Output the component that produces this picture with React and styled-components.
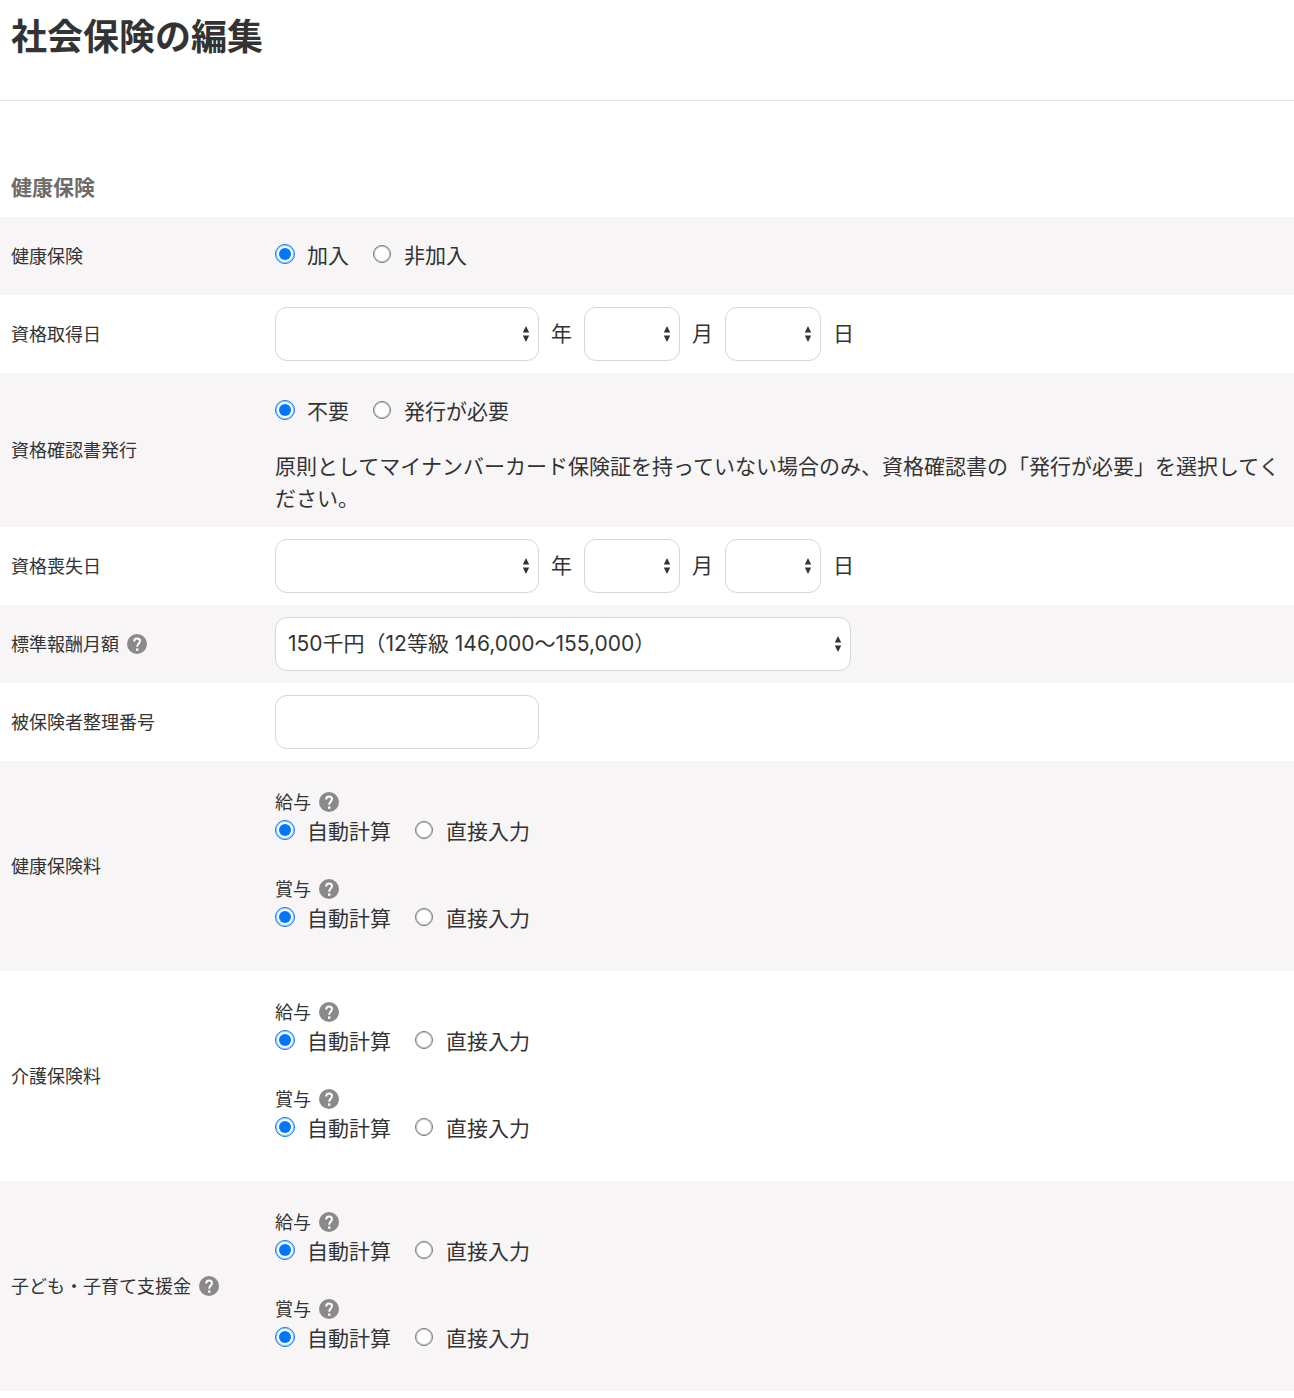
import React, { useId } from "react";
import styled, { createGlobalStyle } from "styled-components";

const GlobalStyle = createGlobalStyle`
    *,
    *::before,
    *::after {
        box-sizing: border-box;
    }
    body {
        margin: 0;
        background-color: #fff;
        color: #333;
        font-family: Inter, "Noto Sans CJK JP", sans-serif;
        font-size: 21px;
        line-height: 32px;
    }
`;

const Header = styled.header`
    padding: 12px 11px 38px;
    border-bottom: 1px solid #e4e4e4;
`;

const Title = styled.h1`
    margin: 0;
    font-size: 36px;
    font-weight: 700;
    line-height: 50px;
`;

const SectionTitle = styled.h2`
    margin: 0;
    padding: 71px 11px 13px;
    color: #6e6b69;
    font-size: 21px;
    font-weight: 700;
`;

const Row = styled.div`
    display: flex;
    &:nth-child(odd) {
        background-color: #f7f5f6;
    }
`;

const RowLabel = styled.div`
    display: flex;
    flex: none;
    align-items: center;
    gap: 8px;
    width: 264px;
    padding: 14px 0 12px 11px;
    font-size: 18px;
`;

const RowBody = styled.div`
    flex: 1;
    min-width: 0;
    padding: 12px 11px;
`;

const HelpButton = styled.button`
    display: flex;
    margin: 0 0 3px;
    padding: 0;
    border: 0;
    background: none;
    color: #8c8a88;
    cursor: pointer;
`;

const RadioGroup = styled.div`
    display: flex;
    align-items: center;
    gap: 23px;
    min-height: ${(props) => (props.$compact ? "32px" : "54px")};
`;

const RadioLabel = styled.label`
    display: flex;
    align-items: center;
    gap: 12px;
`;

const RadioInput = styled.input`
    display: grid;
    place-content: center;
    width: 18px;
    height: 18px;
    margin: 0 1px 4px;
    border: 1px solid #767676;
    border-radius: 50%;
    background-color: #fff;
    box-shadow: inset 0 0 0 1px rgba(118, 118, 118, 0.4);
    appearance: none;
    &:checked {
        width: 20px;
        height: 20px;
        margin: 0 0 4px;
        border-color: #0075ff;
        box-shadow: inset 0 0 0 1px rgba(0, 117, 255, 0.4);
    }
    &:checked::before {
        width: 12px;
        height: 12px;
        border-radius: 50%;
        background-color: #0075ff;
        content: "";
    }
`;

const Note = styled.p`
    margin: 12px 0 0;
`;

const DateFields = styled.div`
    display: flex;
    align-items: center;
    gap: 12px;
`;

const SelectBox = styled.div`
    display: grid;
    align-items: center;
    width: ${(props) => props.$width};
    max-width: 100%;
`;

const SelectField = styled.select`
    grid-area: 1 / 1;
    width: 100%;
    height: 54px;
    padding: 0 28px 0 12px;
    border: 1px solid #d8d6d6;
    border-radius: 12px;
    background-color: #fff;
    color: inherit;
    font: inherit;
    appearance: none;
`;

const SelectArrow = styled.svg`
    grid-area: 1 / 1;
    justify-self: end;
    margin-right: 9px;
    fill: #333;
    pointer-events: none;
`;

const TextInput = styled.input`
    display: block;
    width: 264px;
    max-width: 100%;
    height: 54px;
    padding: 0 12px;
    border: 1px solid #d8d6d6;
    border-radius: 12px;
    background-color: #fff;
    color: inherit;
    font: inherit;
`;

const PremiumList = styled.div`
    display: flex;
    flex-direction: column;
    gap: 27px;
    padding: 15px 0 24px;
`;

const PremiumTitle = styled.div`
    display: flex;
    align-items: center;
    gap: 8px;
    padding-top: 2px;
    font-size: 18px;
    line-height: 26px;
`;

const WIDE = "576px";
const YEAR = "264px";
const SHORT = "96px";

function Help({ name }) {
    return (
        <HelpButton type="button" aria-label={`${name}のヘルプ`}>
            <svg width="20" height="20" viewBox="0 0 20 20" aria-hidden="true">
                <circle cx="10" cy="10" r="10" fill="currentColor" />
                <path
                    d="M7.2 7.5C7.2 5.5 8.4 4.4 10.1 4.4S13 5.5 13 7.1C13 9.4 10.2 9.7 10.2 12.7"
                    fill="none"
                    stroke="#fff"
                    strokeWidth="2"
                />
                <rect x="9" y="14.4" width="2.4" height="2.4" fill="#fff" />
            </svg>
        </HelpButton>
    );
}

function Select({ width, options = [""], ...rest }) {
    return (
        <SelectBox $width={width}>
            <SelectField {...rest}>
                {options.map((option) => (
                    <option key={option}>{option}</option>
                ))}
            </SelectField>
            <SelectArrow width="8" height="18" viewBox="0 0 8 18" aria-hidden="true">
                <path d="M4 1 7.2 7.4H.8zM.8 10.5h6.4L4 17z" />
            </SelectArrow>
        </SelectBox>
    );
}

function Radios({ label, options, compact }) {
    const name = useId();

    return (
        <RadioGroup role="radiogroup" aria-label={label} $compact={compact}>
            {options.map((option, index) => (
                <RadioLabel key={option}>
                    <RadioInput type="radio" name={name} defaultChecked={index === 0} />
                    {option}
                </RadioLabel>
            ))}
        </RadioGroup>
    );
}

function FormRow({ label, htmlFor, help, children }) {
    return (
        <Row>
            <RowLabel>
                {htmlFor ? <label htmlFor={htmlFor}>{label}</label> : label}
                {help && <Help name={label} />}
            </RowLabel>
            <RowBody>{children}</RowBody>
        </Row>
    );
}

function DateRow({ label }) {
    return (
        <FormRow label={label}>
            <DateFields>
                <Select width={YEAR} aria-label={`${label} 年`} />
                年
                <Select width={SHORT} aria-label={`${label} 月`} />
                月
                <Select width={SHORT} aria-label={`${label} 日`} />
                日
            </DateFields>
        </FormRow>
    );
}

function PremiumRow({ label, help }) {
    return (
        <FormRow label={label} help={help}>
            <PremiumList>
                {["給与", "賞与"].map((kind) => (
                    <div key={kind}>
                        <PremiumTitle>
                            {kind}
                            <Help name={kind} />
                        </PremiumTitle>
                        <Radios
                            compact
                            label={`${label} ${kind}`}
                            options={["自動計算", "直接入力"]}
                        />
                    </div>
                ))}
            </PremiumList>
        </FormRow>
    );
}

function App() {
    return (
        <>
            <GlobalStyle />
            <Header>
                <Title>社会保険の編集</Title>
            </Header>
            <main lang="ja">
                <SectionTitle>健康保険</SectionTitle>
                <form>
                    <FormRow label="健康保険">
                        <Radios label="健康保険" options={["加入", "非加入"]} />
                    </FormRow>
                    <DateRow label="資格取得日" />
                    <FormRow label="資格確認書発行">
                        <Radios label="資格確認書発行" options={["不要", "発行が必要"]} />
                        <Note>
                            原則としてマイナンバーカード保険証を持っていない場合のみ、資格確認書の「発行が必要」を選択してください。
                        </Note>
                    </FormRow>
                    <DateRow label="資格喪失日" />
                    <FormRow label="標準報酬月額" htmlFor="monthly-amount" help>
                        <Select
                            id="monthly-amount"
                            width={WIDE}
                            options={["150千円（12等級 146,000〜155,000）"]}
                        />
                    </FormRow>
                    <FormRow label="被保険者整理番号" htmlFor="insured-number">
                        <TextInput id="insured-number" type="text" />
                    </FormRow>
                    <PremiumRow label="健康保険料" />
                    <PremiumRow label="介護保険料" />
                    <PremiumRow label="子ども・子育て支援金" help />
                </form>
            </main>
        </>
    );
}

export default App;
